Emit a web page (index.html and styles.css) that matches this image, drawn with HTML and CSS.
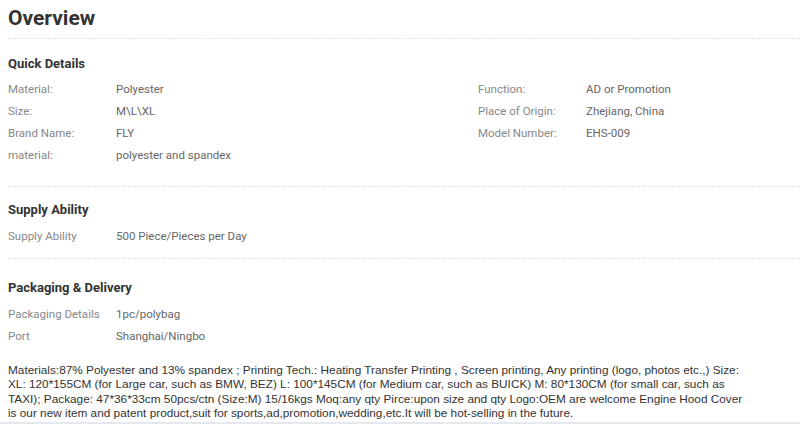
FILE: index.html
```html
<!DOCTYPE html>
<html lang="en">
<head>
<meta charset="UTF-8">
<title>Overview</title>
<link rel="stylesheet" href="styles.css">
</head>
<body>
<div class="overview">
    <h1>Overview</h1>
    <div class="section quick">
        <h2>Quick Details</h2>
        <div class="details">
            <div class="col">
                <div class="row"><span class="label">Material:</span><span class="value">Polyester</span></div>
                <div class="row"><span class="label">Size:</span><span class="value">M\L\XL</span></div>
                <div class="row"><span class="label">Brand Name:</span><span class="value">FLY</span></div>
                <div class="row"><span class="label">material:</span><span class="value">polyester and spandex</span></div>
            </div>
            <div class="col">
                <div class="row"><span class="label">Function:</span><span class="value">AD or Promotion</span></div>
                <div class="row"><span class="label">Place of Origin:</span><span class="value">Zhejiang, China</span></div>
                <div class="row"><span class="label">Model Number:</span><span class="value">EHS-009</span></div>
            </div>
        </div>
    </div>
    <div class="section">
        <h2>Supply Ability</h2>
        <div class="row"><span class="label">Supply Ability</span><span class="value">500 Piece/Pieces per Day</span></div>
    </div>
    <div class="section last">
        <h2>Packaging &amp; Delivery</h2>
        <div class="row"><span class="label">Packaging Details</span><span class="value">1pc/polybag</span></div>
        <div class="row"><span class="label">Port</span><span class="value">Shanghai/Ningbo</span></div>
    </div>
    <p class="description">Materials:87% Polyester and 13% spandex ; Printing Tech.: Heating Transfer Printing , Screen printing, Any printing (logo, photos etc.,) Size: XL: 120*155CM (for Large car, such as BMW, BEZ) L: 100*145CM (for Medium car, such as BUICK) M: 80*130CM (for small car, such as TAXI); Package: 47*36*33cm 50pcs/ctn (Size:M) 15/16kgs Moq:any qty Pirce:upon size and qty Logo:OEM are welcome Engine Hood Cover is our new item and patent product,suit for sports,ad,promotion,wedding,etc.It will be hot-selling in the future.</p>
</div>
</body>
</html>
```

FILE: styles.css
```css
body {
    margin: 0;
    padding: 0;
    background: #fff;
    font-family: Roboto, Arial, sans-serif;
    color: #333;
}
.overview {
    width: 800px;
    height: 424px;
    overflow: hidden;
    border-bottom: 2px solid #e6e8f0;
    box-sizing: border-box;
}
h1 {
    font-size: 21px;
    font-weight: bold;
    color: #333;
    margin: 0 0 0 8px;
    padding: 6px 0 7px;
    line-height: 25px;
    border-bottom: 1px dashed #e4e4e4;
}
h2 {
    font-size: 13px;
    font-weight: bold;
    color: #333;
    margin: 0;
    padding: 16px 0 6px;
    line-height: 17px;
}
.section {
    margin-left: 8px;
    padding-bottom: 11px;
    border-bottom: 1px dashed #e4e4e4;
}
.section + .section h2 {
    padding-top: 14px;
    padding-bottom: 7px;
}
.section.quick {
    padding-bottom: 20px;
}
.section.last {
    border-bottom: none;
    padding-bottom: 0;
}
.section.last h2 {
    padding-top: 20px;
}
.details {
    display: flex;
}
.col {
    width: 470px;
    flex: none;
}
.row {
    display: flex;
    font-size: 11.5px;
    line-height: 22px;
}
.label {
    width: 108px;
    color: #888;
}
.value {
    color: #666;
}
.description {
    font-family: "Liberation Sans", Arial, sans-serif;
    font-size: 11.8px;
    line-height: 14.3px;
    color: #333;
    margin: 16px 0 0 8px;
    width: 745px;
}
```
